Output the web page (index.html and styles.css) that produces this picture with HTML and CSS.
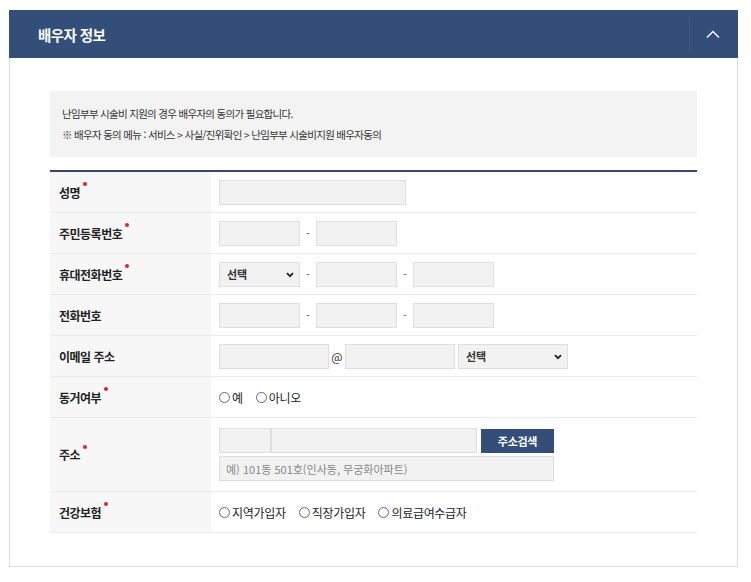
FILE: index.html
```html
<!DOCTYPE html>
<html lang="ko">
<head>
<meta charset="utf-8">
<link rel="stylesheet" href="styles.css">
</head>
<body>
<section class="panel">
  <header class="panel-head">
    <h2 class="panel-title">배우자 정보</h2>
    <button class="toggle" type="button" aria-label="접기">
      <svg width="14" height="8" viewBox="0 0 14 8"><path d="M1 7.5 L7 1.5 L13 7.5" fill="none" stroke="#fff" stroke-width="1.4"/></svg>
    </button>
  </header>
  <div class="panel-body">
    <div class="notice">
      <p>난임부부 시술비 지원의 경우 배우자의 동의가 필요합니다.</p>
      <p>※ 배우자 동의 메뉴 : 서비스 &gt; 사실/진위확인 &gt; 난임부부 시술비지원 배우자동의</p>
    </div>
    <div class="form-table">
      <div class="row">
        <div class="label req">성명</div>
        <div class="field"><input class="inp w-name" type="text"></div>
      </div>
      <div class="row">
        <div class="label req">주민등록번호</div>
        <div class="field"><input class="inp w-s" type="text"><span class="dash">-</span><input class="inp w-s" type="text"></div>
      </div>
      <div class="row">
        <div class="label req">휴대전화번호</div>
        <div class="field">
          <span class="sel w-s"><select><option>선택</option></select><svg class="caret" width="8" height="6" viewBox="0 0 8 6"><path d="M1 1.2 L4 4.2 L7 1.2" fill="none" stroke="#222" stroke-width="1.8"/></svg></span>
          <span class="dash">-</span><input class="inp w-s" type="text"><span class="dash">-</span><input class="inp w-s" type="text">
        </div>
      </div>
      <div class="row">
        <div class="label">전화번호</div>
        <div class="field"><input class="inp w-s" type="text"><span class="dash">-</span><input class="inp w-s" type="text"><span class="dash">-</span><input class="inp w-s" type="text"></div>
      </div>
      <div class="row">
        <div class="label">이메일 주소</div>
        <div class="field">
          <input class="inp w-m" type="text"><span class="at">@</span><input class="inp w-m" type="text">
          <span class="sel w-m sel-mail"><select><option>선택</option></select><svg class="caret" width="8" height="6" viewBox="0 0 8 6"><path d="M1 1.2 L4 4.2 L7 1.2" fill="none" stroke="#222" stroke-width="1.8"/></svg></span>
        </div>
      </div>
      <div class="row">
        <div class="label req">동거여부</div>
        <div class="field radios">
          <label class="radio"><input type="radio" name="live">예</label>
          <label class="radio"><input type="radio" name="live">아니오</label>
        </div>
      </div>
      <div class="row row-addr">
        <div class="label req">주소</div>
        <div class="field addr">
          <div class="addr-line">
            <input class="inp w-zip" type="text"><input class="inp w-road" type="text"><button class="btn-search" type="button">주소검색</button>
          </div>
          <input class="inp w-detail" type="text" placeholder="예) 101동 501호(인사동, 무궁화아파트)">
        </div>
      </div>
      <div class="row">
        <div class="label req">건강보험</div>
        <div class="field radios">
          <label class="radio"><input type="radio" name="ins">지역가입자</label>
          <label class="radio"><input type="radio" name="ins">직장가입자</label>
          <label class="radio"><input type="radio" name="ins">의료급여수급자</label>
        </div>
      </div>
    </div>
  </div>
</section>
</body>
</html>
```

FILE: styles.css
```css
* { box-sizing: border-box; }
html, body { background: #fff; }
body {
  margin: 10px 0 0 9px;
  font-family: "Noto Sans CJK KR", "Noto Sans", "Liberation Sans", sans-serif;
  color: #333;
}
.panel {
  width: 729px;
  border: 1px solid #dcdcdc;
  border-top: none;
}
.panel-head {
  height: 48px;
  margin: 0 -1px;
  background: #344e7a;
  display: flex;
  align-items: center;
  justify-content: space-between;
}
.panel-title {
  margin: 0 0 0 29px;
  color: #fff;
  font-size: 14.5px;
  font-weight: 700;
  letter-spacing: -0.6px;
}
.toggle {
  width: 49px;
  height: 34px;
  border: none;
  border-left: 1px solid #43598a;
  background: transparent;
  display: flex;
  align-items: center;
  justify-content: center;
  padding: 0 2px 0 0;
  margin-right: 0;
}
.panel-body {
  padding: 33px 40px 33px 40px;
}
.notice {
  background: #f3f3f3;
  height: 66px;
  padding: 12px 12px;
  font-size: 10.5px;
  letter-spacing: -0.7px;
  color: #333;
}
.notice p {
  margin: 0;
  line-height: 21px;
}
.form-table {
  margin-top: 13px;
  border-top: 2px solid #3a4868;
}
.row {
  display: flex;
  height: 41px;
  border-bottom: 1px solid #ebebeb;
}
.row-addr { height: 74px; }
.label {
  width: 161px;
  flex: none;
  background: #f7f7f7;
  display: flex;
  align-items: center;
  padding-left: 9px;
  font-size: 12px;
  font-weight: 700;
  letter-spacing: -0.5px;
  color: #222;
}
.label.req::after {
  content: "";
  width: 4px;
  height: 4px;
  border-radius: 50%;
  background: #d8262e;
  margin: -16px 0 0 3px;
}
.field {
  flex: 1;
  display: flex;
  align-items: center;
  padding-left: 8px;
  font-size: 12px;
}
.inp {
  height: 25px;
  border: 1px solid #dedede;
  background: #f2f2f2;
  font-family: inherit;
  font-size: 11px;
  color: #333;
  padding: 0 8px;
  outline: none;
}
.inp::placeholder { color: #888; }
.w-name { width: 187px; }
.w-s { width: 81px; }
.w-m { width: 110px; }
.dash {
  width: 16px;
  text-align: center;
  color: #555;
  font-size: 11px;
}
.at {
  width: 16px;
  text-align: center;
  font-size: 12px;
  color: #333;
}
.sel {
  position: relative;
  display: inline-block;
  height: 25px;
}
.sel select {
  appearance: none;
  -webkit-appearance: none;
  width: 100%;
  height: 25px;
  border: 1px solid #dedede;
  background: #f2f2f2;
  font-family: inherit;
  font-size: 11px;
  font-weight: 700;
  color: #333;
  padding: 0 0 0 7px;
}
.sel-mail { margin-left: 3px; }
.caret {
  position: absolute;
  right: 6px;
  top: 10px;
  pointer-events: none;
}
.radios { gap: 13px; }
.radio {
  display: flex;
  align-items: center;
  font-size: 12px;
  color: #222;
  letter-spacing: -0.3px;
}
.radio input {
  appearance: none;
  -webkit-appearance: none;
  width: 11px;
  height: 11px;
  border: 1px solid #666;
  border-radius: 50%;
  margin: 0 2px 0 0;
  background: #fff;
}
.addr {
  flex-direction: column;
  align-items: flex-start;
  justify-content: center;
  gap: 3px;
}
.addr-line { display: flex; align-items: center; }
.w-zip { width: 52px; }
.w-road { width: 206px; }
.btn-search {
  margin-left: 4px;
  width: 73px;
  height: 24px;
  border: none;
  background: #344e7a;
  color: #fff;
  font-family: inherit;
  font-size: 11px;
  font-weight: 700;
  letter-spacing: -0.3px;
  padding: 0;
}
.w-detail { width: 335px; padding-left: 6px; }
```
